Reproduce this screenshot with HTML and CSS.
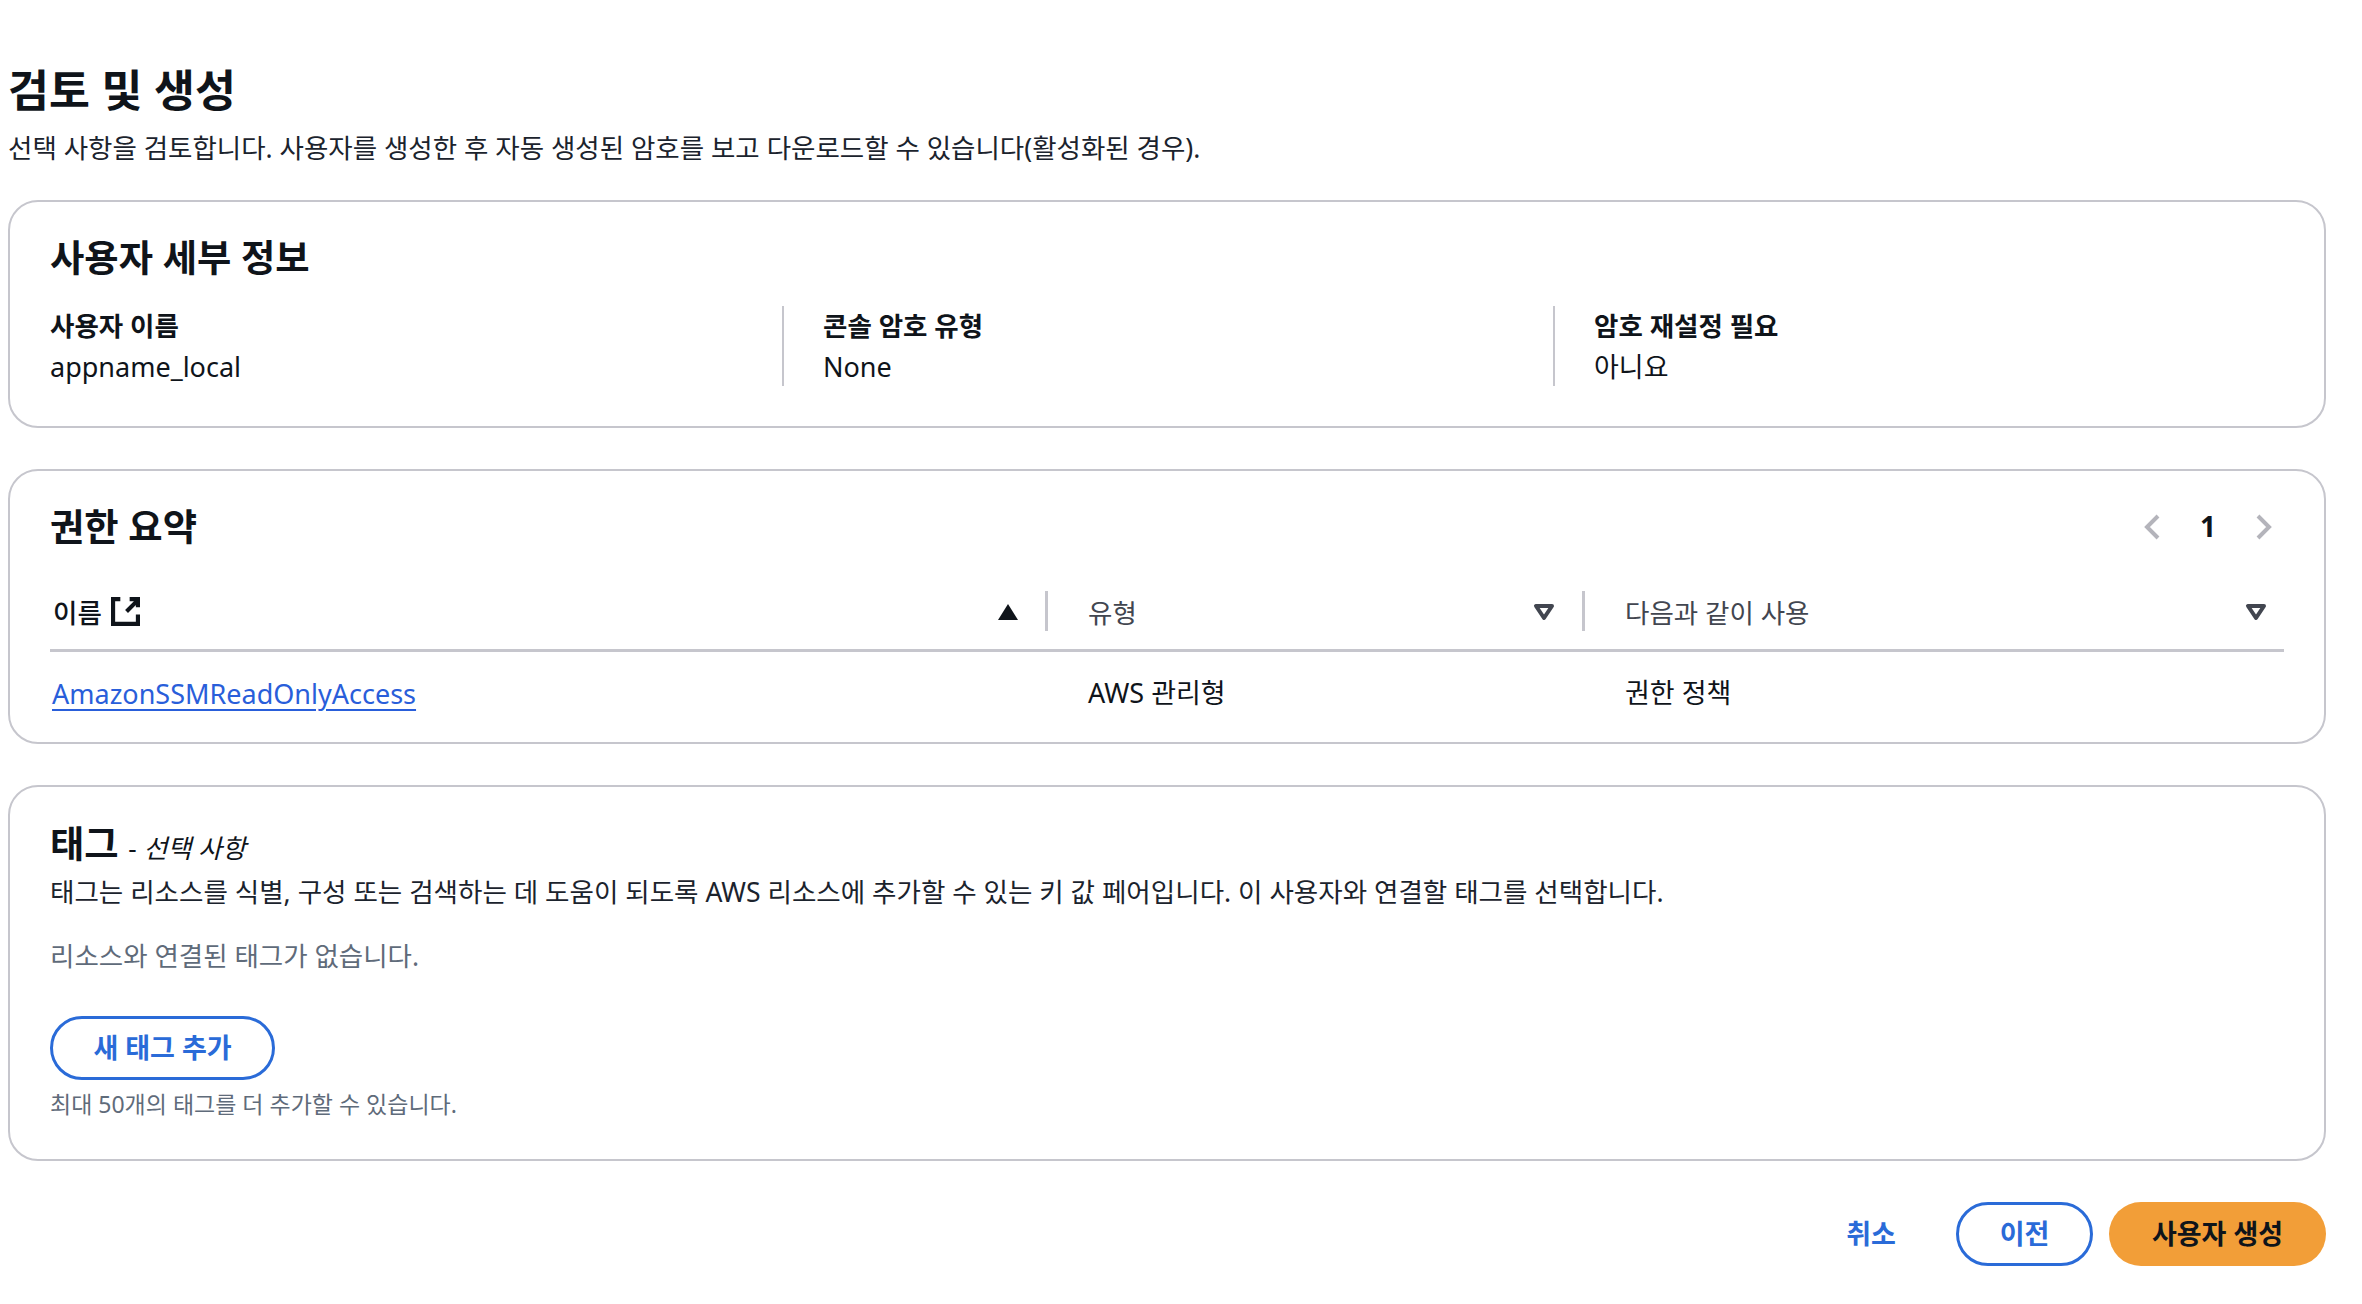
FILE: index.html
```html
<!DOCTYPE html>
<html lang="ko">
<head>
    <title>검토 및 생성</title>
    <link rel="stylesheet" href="styles.css">
</head>
<body>
    <div class="page-header">
        <h1>검토 및 생성</h1>
        <p>선택 사항을 검토합니다. 사용자를 생성한 후 자동 생성된 암호를 보고 다운로드할 수 있습니다(활성화된 경우).</p>
    </div>

    <section class="card details-card">
        <h2>사용자 세부 정보</h2>
        <div class="details">
            <div class="detail">
                <div class="detail-label">사용자 이름</div>
                <div class="detail-value">appname_local</div>
            </div>
            <div class="detail">
                <div class="detail-label">콘솔 암호 유형</div>
                <div class="detail-value">None</div>
            </div>
            <div class="detail">
                <div class="detail-label">암호 재설정 필요</div>
                <div class="detail-value">아니요</div>
            </div>
        </div>
    </section>

    <section class="card perms-card">
        <div class="perms-head">
            <h2>권한 요약</h2>
            <div class="pager">
                <svg class="pager-icon" viewBox="0 0 16 26"><path d="M14 2 3 13l11 11"/></svg>
                <span class="pager-num">1</span>
                <svg class="pager-icon" viewBox="0 0 16 26"><path d="m2 2 11 11L2 24"/></svg>
            </div>
        </div>
        <div class="table-row table-header">
            <div class="cell cell-name">
                <span class="name-label">이름</span>
                <svg class="ext-icon" viewBox="0 0 28 28"><path d="M9 2H2v24h24V17"/><path d="M15 14 25 4M18 2h8v8"/></svg>
                <svg class="sort-icon sort-up" viewBox="0 0 22 18"><path d="M11 1 21 17H1z"/></svg>
            </div>
            <div class="cell cell-split">
                <span>유형</span>
                <svg class="sort-icon" viewBox="0 0 22 18"><path class="sort-hollow" d="M3 3h16l-8 12z"/></svg>
            </div>
            <div class="cell cell-split cell-last">
                <span>다음과 같이 사용</span>
                <svg class="sort-icon" viewBox="0 0 22 18"><path class="sort-hollow" d="M3 3h16l-8 12z"/></svg>
            </div>
        </div>
        <div class="table-row table-body">
            <div class="cell cell-name cell-link"><a href="#">AmazonSSMReadOnlyAccess</a></div>
            <div class="cell cell-plain">AWS 관리형</div>
            <div class="cell cell-plain">권한 정책</div>
        </div>
    </section>

    <section class="card tags-card">
        <h2 class="tags-title">태그 <span class="optional">- <i>선택 사항</i></span></h2>
        <p class="tags-desc">태그는 리소스를 식별, 구성 또는 검색하는 데 도움이 되도록 AWS 리소스에 추가할 수 있는 키 값 페어입니다. 이 사용자와 연결할 태그를 선택합니다.</p>
        <p class="tags-empty">리소스와 연결된 태그가 없습니다.</p>
        <button class="btn btn-outline btn-add" type="button">새 태그 추가</button>
        <p class="tags-hint">최대 50개의 태그를 더 추가할 수 있습니다.</p>
    </section>

    <div class="actions">
        <button class="btn btn-link" type="button">취소</button>
        <button class="btn btn-outline btn-prev" type="button">이전</button>
        <button class="btn btn-primary" type="button">사용자 생성</button>
    </div>
</body>
</html>
```

FILE: styles.css
```css
body {
    font-family: "Noto Sans", "Noto Sans CJK KR", sans-serif;
    font-size: 27px;
    color: #0f141a;
    background-color: #fff;
    margin: 0;
    padding: 0 36px 0 8px;
    overflow: hidden;
}

h1, h2, p {
    margin: 0;
}

.page-header {
    height: 200px;
    padding-top: 60px;
    box-sizing: border-box;
}

h1 {
    font-size: 44.500px;
    font-weight: 700;
    line-height: 60px;
}

.page-header p {
    font-size: 26.500px;
    line-height: 40px;
    margin-top: 8px;
    color: #1b232d;
}

.card {
    border: 2px solid #c6c6cd;
    border-radius: 30px;
    box-sizing: border-box;
    padding: 0 40px;
}

h2 {
    font-size: 37.300px;
    font-weight: 700;
    line-height: 50px;
}

/* user details */
.details-card {
    height: 228px;
    padding-top: 31px;
    margin-bottom: 41px;
}

.details {
    display: grid;
    grid-template-columns: 732px 771px 1fr;
    margin-top: 23px;
}

.detail {
    height: 80px;
    padding-left: 39px;
    border-left: 2px solid #c6c6cd;
}

.detail:first-child {
    padding-left: 0;
    border-left: none;
}

.detail-label {
    font-size: 26.500px;
    font-weight: 700;
    line-height: 40px;
}

.detail-value {
    line-height: 41px;
}

/* permissions */
.perms-card {
    height: 275px;
    padding-top: 31px;
    margin-bottom: 41px;
}

.perms-head {
    display: flex;
    justify-content: space-between;
    align-items: center;
    height: 50px;
}

.pager {
    display: flex;
    align-items: center;
    gap: 40px;
    padding-right: 12px;
}

.pager-icon {
    width: 16px;
    height: 26px;
    fill: none;
    stroke: #b4b4bb;
    stroke-width: 4;
}

.pager-num {
    font-size: 28px;
    font-weight: 700;
    line-height: 38px;
    margin-top: -2px;
}

.table-row {
    display: grid;
    grid-template-columns: 995px 537px 1fr;
}

.table-header {
    height: 83px;
    margin-top: 17px;
    padding-top: 22px;
    box-sizing: border-box;
    border-bottom: 3px solid #c6c6cd;
    font-size: 26.500px;
}

.cell {
    display: flex;
    align-items: center;
    height: 40px;
}

.cell-name {
    padding-left: 3px;
    padding-right: 26px;
}

.cell-link {
    padding-left: 2px;
    padding-top: 2px;
}

.cell-split {
    padding-left: 40px;
    padding-right: 27px;
    border-left: 3px solid #c6c6cd;
    justify-content: space-between;
    color: #424650;
}

.cell-last {
    padding-right: 17px;
}

.name-label {
    font-weight: 500;
    margin-right: 9px;
}

.ext-icon {
    width: 29px;
    height: 29px;
    fill: none;
    stroke: #0f141a;
    stroke-width: 4;
}

.sort-icon {
    width: 22px;
    height: 18px;
    flex-shrink: 0;
    margin-top: 2px;
}

.sort-up {
    margin-left: auto;
    fill: #0f141a;
}

.sort-hollow {
    fill: none;
    stroke: #424650;
    stroke-width: 4;
    stroke-linejoin: round;
}

.table-body {
    padding-top: 19px;
}

.cell-plain {
    padding-left: 43px;
}

a {
    color: #295eda;
    text-decoration: underline;
    text-underline-offset: 5px;
    text-decoration-thickness: 2px;
}

/* tags */
.tags-card {
    height: 376px;
    padding-top: 33px;
}

.tags-title {
    line-height: 47px;
}

.optional {
    font-size: 26px;
    font-weight: 400;
}

.tags-desc {
    font-size: 26.550px;
    line-height: 40px;
    color: #1b232d;
}

.tags-empty {
    font-size: 26.500px;
    line-height: 40px;
    margin-top: 24px;
    color: #5f6b7a;
}

/* buttons */
.btn {
    font-family: inherit;
    font-size: 27px;
    font-weight: 700;
    border-radius: 32px;
    height: 64px;
    box-sizing: border-box;
    padding: 0 0 3px;
    background: none;
    border: none;
    cursor: pointer;
}

.btn-outline {
    color: #2a6bd8;
    border: 3px solid #2a6bd8;
    background-color: #fff;
}

.btn-add {
    display: block;
    width: 225px;
    margin-top: 40px;
}

.tags-hint {
    font-size: 23px;
    line-height: 34px;
    margin-top: 7px;
    color: #5f6b7a;
}

.actions {
    display: flex;
    justify-content: flex-end;
    align-items: center;
    gap: 16px;
    margin-top: 41px;
}

.btn-link {
    color: #2a6bd8;
    width: 124px;
    margin-right: 7px;
}

.btn-prev {
    width: 137px;
}

.btn-primary {
    width: 217px;
    color: #0f141a;
    background-color: #f29e38;
}
```
